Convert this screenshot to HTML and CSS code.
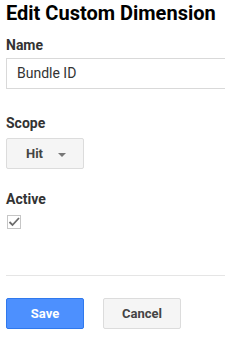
FILE: index.html
```html
<!DOCTYPE html>
<html>
<head>
<meta charset="utf-8">
<link rel="stylesheet" href="styles.css">
</head>
<body>
<div class="page">
  <h1 class="title">Edit Custom Dimension</h1>
  <div class="field">
    <div class="label">Name</div>
    <div class="input">Bundle ID</div>
  </div>
  <div class="field scope">
    <div class="label">Scope</div>
    <div class="select"><span>Hit</span><span class="caret"></span></div>
  </div>
  <div class="field active">
    <div class="label">Active</div>
    <div class="checkbox">
      <svg width="14" height="14" viewBox="0 0 14 14"><rect x="0.5" y="0.5" width="13" height="13" fill="#fff" stroke="#c6c6c6"/><path d="M2.5 7 L5.5 10 L12 3" fill="none" stroke="#6b6b6b" stroke-width="1.8"/></svg>
    </div>
  </div>
  <div class="divider"></div>
  <div class="buttons">
    <div class="btn primary">Save</div>
    <div class="btn secondary">Cancel</div>
  </div>
</div>
</body>
</html>
```
FILE: styles.css
```css
html, body { margin: 0; padding: 0; background: #fff; }
body { font-family: Roboto, "Liberation Sans", Arial, sans-serif; }
.page { padding-left: 6px; }
.title { margin: 0; padding-top: 1px; font-size: 20px; line-height: 24px; font-weight: 700; color: #000; }
.label { font-size: 14px; font-weight: 700; color: #333; line-height: 16px; }
.field { margin-top: 12px; }
.input { margin-top: 5px; height: 29px; border: 1px solid #d9d9d9; border-right: none; padding-left: 10px; font-size: 14px; line-height: 29px; color: #333; }
.scope { margin-top: 26px; }
.select { margin-top: 7px; width: 76px; height: 29px; border: 1px solid #dcdcdc; border-radius: 2px; background: #f5f5f5; display: flex; align-items: center; font-size: 13px; font-weight: 700; color: #444; }
.select span:first-child { margin-left: 19px; }
.caret { margin-left: 15px; width: 0; height: 0; border-left: 4px solid transparent; border-right: 4px solid transparent; border-top: 4px solid #777; margin-top: 2px; }
.active { margin-top: 22px; }
.checkbox { margin-top: 8px; margin-left: 1px; height: 14px; }
.checkbox svg { display: block; }
.divider { margin-top: 46px; height: 1px; background: #e5e5e5; }
.buttons { display: flex; gap: 19px; margin-top: 22px; }
.btn { width: 76px; height: 29px; border-radius: 2px; display: flex; align-items: center; justify-content: center; font-size: 13px; font-weight: 700; }
.primary { background: #4d90fe; border: 1px solid #3079ed; color: #fff; }
.secondary { background: #f5f5f5; border: 1px solid #dcdcdc; color: #444; }
```
